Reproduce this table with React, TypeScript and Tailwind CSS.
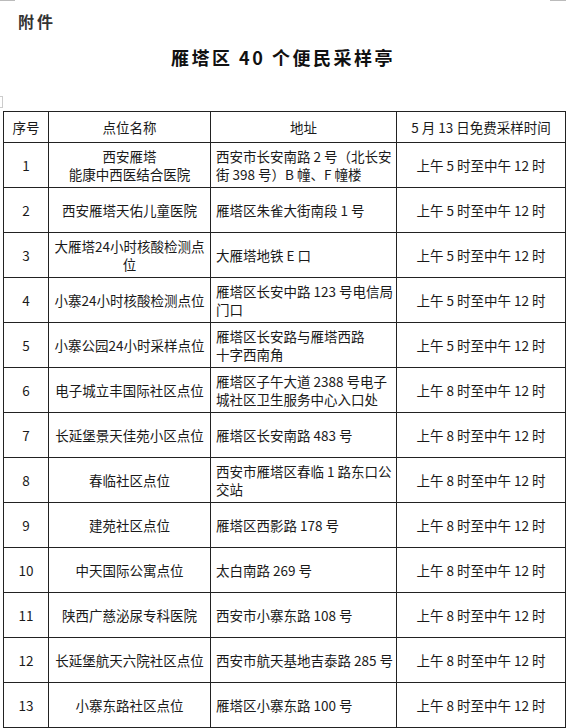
const rows: { no: string; name: string[]; addr: string[]; time: string }[] = [
  { no: '1', name: ['西安雁塔', '能康中西医结合医院'], addr: ['西安市长安南路 2 号（北长安', '街 398 号）B 幢、F 幢楼'], time: '上午 5 时至中午 12 时' },
  { no: '2', name: ['西安雁塔天佑儿童医院'], addr: ['雁塔区朱雀大街南段 1 号'], time: '上午 5 时至中午 12 时' },
  { no: '3', name: ['大雁塔24小时核酸检测点', '位'], addr: ['大雁塔地铁 E 口'], time: '上午 5 时至中午 12 时' },
  { no: '4', name: ['小寨24小时核酸检测点位'], addr: ['雁塔区长安中路 123 号电信局', '门口'], time: '上午 5 时至中午 12 时' },
  { no: '5', name: ['小寨公园24小时采样点位'], addr: ['雁塔区长安路与雁塔西路', '十字西南角'], time: '上午 5 时至中午 12 时' },
  { no: '6', name: ['电子城立丰国际社区点位'], addr: ['雁塔区子午大道 2388 号电子', '城社区卫生服务中心入口处'], time: '上午 8 时至中午 12 时' },
  { no: '7', name: ['长延堡景天佳苑小区点位'], addr: ['雁塔区长安南路 483 号'], time: '上午 8 时至中午 12 时' },
  { no: '8', name: ['春临社区点位'], addr: ['西安市雁塔区春临 1 路东口公', '交站'], time: '上午 8 时至中午 12 时' },
  { no: '9', name: ['建苑社区点位'], addr: ['雁塔区西影路 178 号'], time: '上午 8 时至中午 12 时' },
  { no: '10', name: ['中天国际公寓点位'], addr: ['太白南路 269 号'], time: '上午 8 时至中午 12 时' },
  { no: '11', name: ['陕西广慈泌尿专科医院'], addr: ['西安市小寨东路 108 号'], time: '上午 8 时至中午 12 时' },
  { no: '12', name: ['长延堡航天六院社区点位'], addr: ['西安市航天基地吉泰路 285 号'], time: '上午 8 时至中午 12 时' },
  { no: '13', name: ['小寨东路社区点位'], addr: ['雁塔区小寨东路 100 号'], time: '上午 8 时至中午 12 时' },
];

function Lines({ lines }: { lines: string[] }) {
  return (
    <>
      {lines.map((l, i) => (
        <div key={i} className="whitespace-nowrap">
          {l}
        </div>
      ))}
    </>
  );
}

export default function App() {
  return (
    <div
      className="relative h-[728px] w-full overflow-hidden bg-white text-[#1a1a1a]"
      style={{ fontFamily: '"Noto Sans CJK SC", "Noto Sans", sans-serif' }}
    >
      {/* page corner marks */}
      <div className="absolute left-0 top-0 h-px w-[15px] bg-[#bbb]" />
      <div className="absolute right-0 top-0 h-px w-[16px] bg-[#bbb]" />
      <div className="absolute left-0 top-[96px] h-[12px] w-[3px] border-y border-r border-[#ccc]" />

      <div className="pl-[18px] pt-[11px] text-[16px] font-bold leading-[20px] tracking-[3px] text-[#333]">附件</div>

      <div className="mt-[16px] text-center text-[18px] font-bold leading-[20px] tracking-[2.5px] text-[#111]">
        雁塔区 40 个便民采样亭
      </div>

      <div className="ml-[3px] mr-[1px] mt-[44px]">
        <table className="w-[562px] table-fixed border-collapse text-[13.5px] leading-[18px]">
          <colgroup>
            <col className="w-[45px]" />
            <col className="w-[162px]" />
            <col className="w-[186px]" />
            <col className="w-[169px]" />
          </colgroup>
          <thead>
            <tr className="h-[31px]">
              <th className="border border-[#222] text-center font-normal">序号</th>
              <th className="border border-[#222] text-center font-normal">点位名称</th>
              <th className="border border-[#222] text-center font-normal">地址</th>
              <th className="border border-[#222] text-center font-normal">5 月 13 日免费采样时间</th>
            </tr>
          </thead>
          <tbody>
            {rows.map((r) => (
              <tr key={r.no} className="h-[45px]">
                <td className="border border-[#222] text-center">{r.no}</td>
                <td className="border border-[#222] text-center">
                  <Lines lines={r.name} />
                </td>
                <td className="border border-[#222] pl-[5px] text-left">
                  <Lines lines={r.addr} />
                </td>
                <td className="border border-[#222] text-center">{r.time}</td>
              </tr>
            ))}
          </tbody>
        </table>
      </div>
    </div>
  );
}
